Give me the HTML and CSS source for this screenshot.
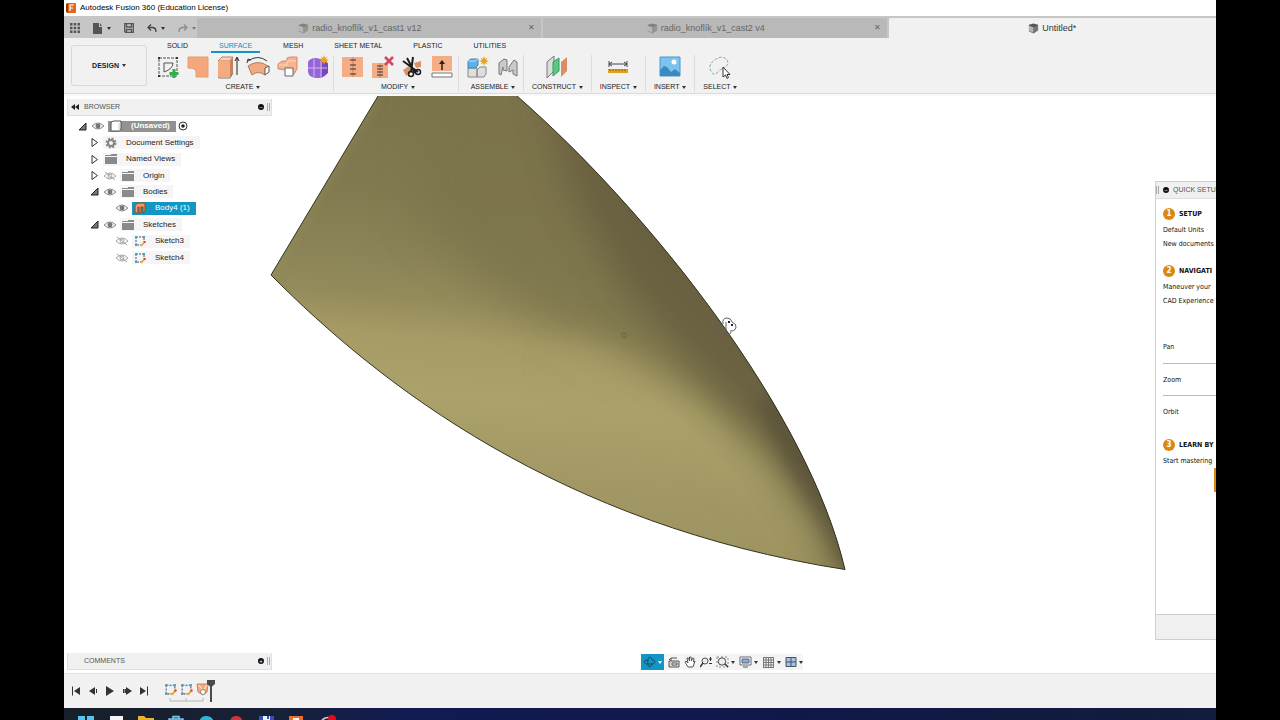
FILE: index.html
```html
<!DOCTYPE html>
<html lang="en">
<head>
<meta charset="utf-8">
<title>Autodesk Fusion 360 (Education License)</title>
<link rel="stylesheet" href="styles.css">
</head>
<body>
<svg class="defs" aria-hidden="true">
  <symbol id="eye" viewBox="0 0 14 10"><path d="M1 5Q7-1 13 5Q7 11 1 5Z" fill="#eee" stroke="#8b8b8b"/><circle cx="7" cy="5" r="2.4" fill="#777"/></symbol>
  <symbol id="eye-off" viewBox="0 0 14 10"><path d="M1 5Q7-1 13 5Q7 11 1 5ZM2 1L12 9" fill="none" stroke="#a5a5a5"/><circle cx="7" cy="5" r="2" fill="none" stroke="#a5a5a5"/></symbol>
  <symbol id="folder" viewBox="0 0 12 10"><path d="M0 1h6v1H0zM6 0h6v2H6zM0 3h12v7H0z" fill="#8a8a8a"/></symbol>
  <symbol id="open" viewBox="0 0 9 9"><path d="M8 1V8H1Z" fill="#777" stroke="#222"/></symbol>
  <symbol id="closed" viewBox="0 0 9 9"><path d="M2 .5L7.500 4.500L2 8.500Z" fill="#fff" stroke="#333"/></symbol>
  <symbol id="sketch" viewBox="0 0 12 12"><path d="M2 2H10V7M2 2V10H7" fill="none" stroke="#556" stroke-dasharray="2 1"/><path d="M1 1h2v2H1zM9 1h2v2H9zM1 9h2v2H1z" fill="#4aa3c7"/><path d="M7 11L10.500 7" stroke="#e8a33a" stroke-width="1.800"/><circle cx="10.800" cy="7" r="1" fill="#d2382c"/></symbol>
  <symbol id="cube" viewBox="0 0 12 12"><path d="M1 2L6 .5L11 2V8L6 11.500L1 9Z" fill="#555"/><path d="M1 3L6 4.500V11L1 8.500Z" fill="#b4b4b4"/><path d="M6 4.500L11 2.500V8L6 11Z" fill="#777"/></symbol>
  <symbol id="star" viewBox="0 0 10 10"><path d="M5 0L6 3L8.500 1.500L7 4L10 5L7 6L8.500 8.500L6 7L5 10L4 7L1.500 8.500L3 6L0 5L3 4L1.500 1.500L4 3Z" fill="#eaa21c"/></symbol>
</svg>
<div class="app">
  <header class="titlebar">
    <svg class="ico10" viewBox="0 0 10 10"><rect x="1" width="9" height="10" rx="1" fill="#e2661c"/><path d="M0 1L2 0V10L0 9Z" fill="#8f3b0e"/><path d="M4 8V2H8M4 5H7" fill="none" stroke="#fff" stroke-width="1.200"/></svg>
    <span>Autodesk Fusion 360 (Education License)</span>
  </header>

  <div class="docbar">
    <div class="quick">
      <button aria-label="Data panel"><svg width="10" height="10" viewBox="0 0 10 10" fill="#555"><path d="M0 0h2.500v2.500H0zM3.700 0h2.500v2.500H3.700zM7.500 0h2.500v2.500H7.500zM0 3.700h2.500v2.500H0zM3.700 3.700h2.500v2.500H3.700zM7.500 3.700h2.500v2.500H7.500zM0 7.500h2.500v2.500H0zM3.700 7.500h2.500v2.500H3.700zM7.500 7.500h2.500v2.500H7.500z"/></svg></button>
      <button aria-label="File"><svg width="10" height="12" viewBox="0 0 10 12"><path d="M0 1H6V5H9V12H0Z" fill="#555"/><path d="M7 1L9 4H7Z" fill="#555"/></svg><i class="caret"></i></button>
      <button aria-label="Save"><svg width="10" height="10" viewBox="0 0 10 10"><path d="M.7.700H9.300V9.300H1.500L.7 8.500ZM2.500 1V4H7.500V1M2.500 9V6.500H7.500V9" fill="none" stroke="#555" stroke-width="1.300"/></svg></button>
      <button aria-label="Undo"><svg width="10" height="9" viewBox="0 0 10 9"><path d="M1 3.500H6Q9 4 9 8M4 .5L1 3.500L4 6.500" fill="none" stroke="#444" stroke-width="1.300"/></svg><i class="caret"></i></button>
      <button aria-label="Redo" class="dim"><svg width="10" height="9" viewBox="0 0 10 9"><path d="M9 3.500H4Q1 4 1 8M6 .5L9 3.500L6 6.500" fill="none" stroke="#555" stroke-width="1.300"/></svg><i class="caret"></i></button>
    </div>
    <div class="tab dimtab"><div class="tabname"><svg class="ico11"><use href="#cube"/></svg><span>radio_knoflík_v1_cast1 v12</span></div><button class="close" aria-label="Close">✕</button></div>
    <div class="tab dimtab"><div class="tabname"><svg class="ico11"><use href="#cube"/></svg><span>radio_knoflík_v1_cast2 v4</span></div><button class="close" aria-label="Close">✕</button></div>
    <div class="tab current"><div class="tabname"><svg class="ico11"><use href="#cube"/></svg><span>Untitled*</span></div></div>
  </div>

  <div class="ribbon">
    <button class="design">DESIGN <i class="caret"></i></button>
    <div class="ribbonmain">
      <nav class="modes">
        <button>SOLID</button><button class="on">SURFACE</button><button>MESH</button><button>SHEET METAL</button><button>PLASTIC</button><button>UTILITIES</button>
      </nav>
      <div class="groups">
        <div class="group many">
          <div class="icons">
            <svg viewBox="0 0 24 24"><path d="M3 3H21V21H3Z" fill="none" stroke="#555" stroke-dasharray="3 1"/><path d="M2 2h2v2H2zM20 2h2v2h-2zM2 20h2v2H2z" fill="#333"/><path d="M8 8H17Q17 14 8 17Z" fill="none" stroke="#555"/><path d="M18 14V23M13.500 18.500H22.500" stroke="#2fae4e" stroke-width="3"/></svg>
            <svg viewBox="0 0 24 24"><path d="M2 2H22V22H10V17Q10 13 2 13Z" fill="#f4a77c" stroke="#e59d72"/></svg>
            <svg viewBox="0 0 24 24"><path d="M2 6L6 2H17L14 6Z" fill="#fbd0b3" stroke="#b78465"/><path d="M2 6H14V22H2Z" fill="#f5ab80"/><path d="M14 6L17 2V18L14 22Z" fill="#c9825a"/><path d="M2 22L3 23H14L17 18" fill="none" stroke="#777"/><path d="M21 20V3M19 6L21 2L23 6" fill="none" stroke="#222"/></svg>
            <svg viewBox="0 0 24 24"><path d="M2 11Q12 4 22 11L19 20Q12 15 6 20Z" fill="#f4aa80" stroke="#ad7c61"/><path d="M19 13L23 11V17L19 20Z" fill="#fff" stroke="#555"/><path d="M2 6Q12-1 21 6M1 8L2 4L5 5" fill="none" stroke="#333"/></svg>
            <svg viewBox="0 0 24 24"><path d="M2 9L6 6H11V3L14 2H21V14L18 19H10V15L2 14Z" fill="#f6b38d" stroke="#cf8e6b"/><path d="M3 10H11V6H20" fill="none" stroke="#ffd8be"/><path d="M9 13H17V21H9Z" fill="#fff" stroke="#666"/></svg>
            <svg viewBox="0 0 24 24"><path d="M2 7Q4 3 10 3L20 5Q22 7 22 17Q19 23 12 23Q3 23 2 17Z" fill="#9564d6"/><path d="M16 6L22 8V18L16 22Z" fill="#7648b9"/><path d="M8 4V22M15 6V22M2 13H21" stroke="#d2b6f5" fill="none"/><use href="#star" x="13" y="0" width="10" height="10"/></svg>
          </div>
          <button class="grouplabel">CREATE <i class="caret"></i></button>
        </div>
        <div class="group many">
          <div class="icons">
            <svg viewBox="0 0 24 24"><path d="M1 2H22V22H1Z" fill="#f4ad84"/><path d="M12 2V22" stroke="#c88257"/><path d="M9 5h6M9 10h6M9 14h6M9 19h6" stroke="#333"/></svg>
            <svg viewBox="0 0 24 24"><path d="M1 8H17V23H1Z" fill="#f4ad84"/><path d="M9 8V23" stroke="#c88257"/><path d="M6 11h6M6 14h6M6 17h6M6 20h6" stroke="#333"/><path d="M14 2L22 10M22 2L14 10" stroke="#d64560" stroke-width="2.500"/></svg>
            <svg viewBox="0 0 24 24"><path d="M2 15L8 11L11 17L5 21Z" fill="#dd9268"/><path d="M13 8L20 6V12L15 13Z" fill="#dd9268"/><path d="M6 3L14 18M2 6L17 17M12 2L10 17" stroke="#1d1d1d" stroke-width="2"/><circle cx="10" cy="19" r="2.500" fill="none" stroke="#1d1d1d" stroke-width="1.500"/><circle cx="17" cy="17" r="2.500" fill="none" stroke="#1d1d1d" stroke-width="1.500"/></svg>
            <svg viewBox="0 0 24 24"><path d="M1 1H21V16H1Z" fill="#f4ad84"/><path d="M1 18H21V22H1Z" fill="#fff" stroke="#777"/><path d="M11 15V8" stroke="#222" stroke-width="1.500"/><path d="M8 9L11 5L14 9Z" fill="#222"/></svg>
          </div>
          <button class="grouplabel">MODIFY <i class="caret"></i></button>
        </div>
        <div class="group many">
          <div class="icons">
            <svg viewBox="0 0 24 24"><path d="M2 13H11V22H2ZM11 15L14 12H20V19L18 22H11Z" fill="#dedede" stroke="#888"/><path d="M2 6L5 4H12V10L10 13H2Z" fill="#5fb1e5" stroke="#3f87b5"/><path d="M2 6H9L12 4" fill="none" stroke="#b9e0f6"/><use href="#star" x="13" y="1" width="10" height="10"/></svg>
            <svg viewBox="0 0 24 24"><path d="M3 8L8 4L11 5V16L7 15V12L5 20L3 19Z" fill="#c7cbcd" stroke="#777"/><path d="M13 12L18 5L21 7V21L17 19V15L13 17Z" fill="#c7cbcd" stroke="#777"/></svg>
          </div>
          <button class="grouplabel">ASSEMBLE <i class="caret"></i></button>
        </div>
        <div class="group">
          <div class="icons">
            <svg viewBox="0 0 24 24"><path d="M2 7L9 1V16L2 23Z" fill="#dcdcdc" stroke="#777"/><path d="M8 7L14 3V16L8 21Z" fill="#59c983" stroke="#339b5d"/><path d="M16 7L22 2V16L16 22Z" fill="#dc8c61"/></svg>
          </div>
          <button class="grouplabel">CONSTRUCT <i class="caret"></i></button>
        </div>
        <div class="group">
          <div class="icons">
            <svg viewBox="0 0 24 24"><path d="M3 6V12M21 6V12M3 9H21M6 7L3 9L6 11M18 7L21 9L18 11" fill="none" stroke="#445"/><path d="M2 14H22V18H2Z" fill="#e3a01c"/><path d="M4 14v2M7 14v2M10 14v2M13 14v2M16 14v2M19 14v2" stroke="#8e6413"/></svg>
          </div>
          <button class="grouplabel">INSPECT <i class="caret"></i></button>
        </div>
        <div class="group">
          <div class="icons">
            <svg viewBox="0 0 24 24"><path d="M2 2H22V21H2Z" fill="#7cc4ef" stroke="#4a98c9"/><path d="M2 15L6 11L9 12L13 17L17 14L22 18V21H2Z" fill="#3b8bc1"/><circle cx="16" cy="7" r="2.500" fill="#fff"/></svg>
          </div>
          <button class="grouplabel">INSERT <i class="caret"></i></button>
        </div>
        <div class="group last">
          <div class="icons">
            <svg viewBox="0 0 24 24"><path d="M14 14Q22 10 19 5Q15 0 8 4Q-1 10 3 16Q5 21 9 18Q11 15 14 14" fill="none" stroke="#79ad9d" stroke-dasharray="3 1.500"/><path d="M15 12V22L17.500 20L19 23.500L20.500 22.500L19 19.500H22Z" fill="#fff" stroke="#333"/></svg>
          </div>
          <button class="grouplabel">SELECT <i class="caret"></i></button>
        </div>
      </div>
    </div>
  </div>

  <main class="canvas">
    <svg class="model" viewBox="64 96 1152 577" preserveAspectRatio="xMidYMid slice" role="img" aria-label="Surface body">
      <defs>
        <linearGradient id="base" gradientUnits="userSpaceOnUse" x1="400" y1="96" x2="360" y2="570">
          <stop offset="0" stop-color="#7c744b"/><stop offset=".2" stop-color="#817a50"/><stop offset=".34" stop-color="#8b8457"/><stop offset=".42" stop-color="#948b5b"/><stop offset=".5" stop-color="#a69b65"/><stop offset=".62" stop-color="#aba16a"/><stop offset=".8" stop-color="#a19764"/><stop offset="1" stop-color="#9c925d"/>
        </linearGradient>
        <clipPath id="bodyclip"><path d="M378 96L271 275C380 385 560 525 845 569.500C808 412 650 212 517 96Z"/></clipPath>
        <filter id="wide" x="-30%" y="-30%" width="160%" height="160%"><feGaussianBlur stdDeviation="22"/></filter>
        <filter id="mid" x="-30%" y="-30%" width="160%" height="160%"><feGaussianBlur stdDeviation="18"/></filter>
        <filter id="thin" x="-30%" y="-30%" width="160%" height="160%"><feGaussianBlur stdDeviation="7"/></filter>
      </defs>
      <g clip-path="url(#bodyclip)">
        <path d="M250 80H860V590H250Z" fill="url(#base)"/>
        <path d="M430 60L420 220L510 300L600 345L690 395L770 465L860 610V60Z" fill="#7b734c" opacity=".8" filter="url(#wide)"/>
        <path d="M540 60L570 190L625 290L690 365L770 450L860 600V60Z" fill="#675f3f" opacity=".9" filter="url(#mid)"/>
        <path d="M755 400L785 460L814 512L845 574L880 570L820 390Z" fill="#5b553b" opacity=".85" filter="url(#thin)"/>
        <path d="M370 90L262 274" stroke="#98905c" stroke-width="18" opacity=".65" filter="url(#thin)"/>
        <path d="M560 360Q660 390 760 485L820 555" fill="none" stroke="#b0a66e" stroke-width="22" opacity=".6" filter="url(#mid)"/>
      </g>
      <path d="M378 96L271 275C380 385 560 525 845 569.500C808 412 650 212 517 96" fill="none" stroke="#353322"/>
      <circle cx="624" cy="335.500" r="2.500" fill="none" stroke="#5c6b3e"/>
      <g fill="none" stroke="#5b6066"><path d="M723 324Q722 318 727 318Q731 318 732 322Q737 324 736 328Q734 332 730 331M721 323Q716 325 717 329Q719 332 722 331M723 331Q724 336 728 335Q731 334 731 332M726 322V331"/><path d="M728 321h2v2h-2zM731 324h2v2h-2z" fill="#222" stroke="none"/></g>
    </svg>

    <aside class="left">
      <section>
        <div class="panelhead"><svg width="8" height="6" viewBox="0 0 8 6"><path d="M4 0V6L0 3ZM8 0V6L4 3Z" fill="#222"/></svg><span>BROWSER</span><button class="dot" aria-label="Collapse">–</button><i class="grip"></i></div>
        <ul class="tree">
          <li class="l0"><svg class="arrow"><use href="#open"/></svg><svg class="eye"><use href="#eye"/></svg><span class="node root"><svg class="ico12" viewBox="0 0 12 12"><path d="M1 3L3 1H11V9L9 11H1Z" fill="#fff" stroke="#555"/><path d="M9 3V11" stroke="#ccc"/></svg>(Unsaved)</span><svg class="radio" viewBox="0 0 10 10"><circle cx="5" cy="5" r="4" fill="#fff" stroke="#333"/><circle cx="5" cy="5" r="1.800" fill="#222"/></svg></li>
          <li class="l1"><svg class="arrow"><use href="#closed"/></svg><span class="node"><svg class="ico12" viewBox="0 0 12 12"><circle cx="6" cy="6" r="4.500" fill="none" stroke="#858585" stroke-width="2" stroke-dasharray="2 1.530"/><circle cx="6" cy="6" r="3" fill="none" stroke="#858585" stroke-width="2"/></svg>Document Settings</span></li>
          <li class="l1"><svg class="arrow"><use href="#closed"/></svg><span class="node"><svg class="ico12"><use href="#folder"/></svg>Named Views</span></li>
          <li class="l1"><svg class="arrow"><use href="#closed"/></svg><svg class="eye"><use href="#eye-off"/></svg><span class="node"><svg class="ico12"><use href="#folder"/></svg>Origin</span></li>
          <li class="l1"><svg class="arrow"><use href="#open"/></svg><svg class="eye"><use href="#eye"/></svg><span class="node"><svg class="ico12"><use href="#folder"/></svg>Bodies</span></li>
          <li class="l2"><svg class="arrow"></svg><svg class="eye"><use href="#eye"/></svg><span class="node selected"><svg class="ico12" viewBox="0 0 12 12"><path d="M1 3L4 1H11V9L9 11V5H7V11H5V5H4V11H1Z" fill="#ef995f" stroke="#8a4b20"/></svg>Body4 (1)</span></li>
          <li class="l1"><svg class="arrow"><use href="#open"/></svg><svg class="eye"><use href="#eye"/></svg><span class="node"><svg class="ico12"><use href="#folder"/></svg>Sketches</span></li>
          <li class="l2"><svg class="arrow"></svg><svg class="eye"><use href="#eye-off"/></svg><span class="node"><svg class="ico12"><use href="#sketch"/></svg>Sketch3</span></li>
          <li class="l2"><svg class="arrow"></svg><svg class="eye"><use href="#eye-off"/></svg><span class="node"><svg class="ico12"><use href="#sketch"/></svg>Sketch4</span></li>
        </ul>
      </section>
      <div class="panelhead comments"><span>COMMENTS</span><button class="dot" aria-label="Expand">+</button><i class="grip"></i></div>
    </aside>

    <div class="navbar">
      <button class="on" aria-label="Orbit"><svg width="13" height="12" viewBox="0 0 13 12"><path d="M5 4Q5 1 7 1Q9 2 9 4Q12 4 12 6Q11 9 7 8Q3 9 1 6Q1 4 5 4Q4 11 7 11Q9 10 9 7" fill="none" stroke="#10506a"/></svg><i class="caret light"></i></button>
      <button aria-label="Look at"><svg width="12" height="12" viewBox="0 0 12 12"><path d="M1 5H11V11H1ZM3 5V2L1 4M3 2H9" fill="#ddd" stroke="#555"/><path d="M4 7H9V9H4Z" fill="#fff" stroke="#555"/></svg></button>
      <button aria-label="Pan"><svg width="12" height="12" viewBox="0 0 12 12"><path d="M4 11L1 6L2 5L4 7L3 2L4.500 2L5.500 5L5.500 1H7L7.500 5L8.500 2L10 2.500L9.500 6L11 5L9 11Z" fill="#fff" stroke="#555"/></svg></button>
      <button aria-label="Zoom"><svg width="12" height="12" viewBox="0 0 12 12"><circle cx="5" cy="5" r="3" fill="#e7eef4" stroke="#555"/><path d="M3 7L0 11" stroke="#333" stroke-width="1.500"/><path d="M9 3h3M10.500 1v4M9 7.500h3" stroke="#333"/></svg></button>
      <button aria-label="Fit"><svg width="13" height="12" viewBox="0 0 13 12"><path d="M1 1H12V11H1Z" fill="none" stroke="#888" stroke-dasharray="2 2"/><circle cx="6" cy="5.500" r="3.700" fill="#eaf0f4" stroke="#444"/><path d="M9 8L12 11" stroke="#333" stroke-width="1.500"/></svg><i class="caret"></i></button>
      <button aria-label="Display"><svg width="13" height="12" viewBox="0 0 13 12"><path d="M1 1H12V9H1Z" fill="#fff" stroke="#667"/><path d="M3 3H10V7H3Z" fill="#8cabdd" stroke="#567"/><path d="M4 11H9" stroke="#555"/></svg><i class="caret"></i></button>
      <button aria-label="Grid"><svg width="13" height="12" viewBox="0 0 13 12"><path d="M1.500 1V11.500M4 1V11.500M6.500 1V11.500M9 1V11.500M11.500 1V11.500M1 1.500H12M1 4H12M1 6.500H12M1 9H12M1 11.500H12" stroke="#777"/></svg><i class="caret"></i></button>
      <button aria-label="Viewports"><svg width="12" height="12" viewBox="0 0 12 12"><path d="M1 1.500H11V10.500H1ZM6 1.500V10.500M1 6H11" fill="#a9bfe4" stroke="#456"/></svg><i class="caret"></i></button>
    </div>

    <aside class="setup">
      <div class="panelhead setuphead"><i class="grip"></i><button class="dot" aria-label="Collapse">–</button><span>QUICK SETUP</span></div>
      <div class="setupbody">
        <h2><b class="num">1</b>SETUP</h2>
        <p>Default Units</p>
        <p>New documents</p>
        <h2 class="second"><b class="num">2</b>NAVIGATI</h2>
        <p>Maneuver your</p>
        <p>CAD Experience</p>
        <div class="moves"><p>Pan</p><p>Zoom</p><p>Orbit</p></div>
        <h2><b class="num">3</b>LEARN BY</h2>
        <p>Start mastering</p>
        <button class="go" aria-label="Start learning"></button>
      </div>
      <div class="setupfoot"></div>
    </aside>
  </main>

  <footer class="timeline">
    <div class="playback">
      <button aria-label="First"><svg viewBox="0 0 10 10"><path d="M1 .5H2V9.500H1ZM9 1V9L3 5Z"/></svg></button>
      <button aria-label="Previous"><svg viewBox="0 0 10 10"><path d="M7 1V9L1 5ZM8 3H9V7H8Z"/></svg></button>
      <button aria-label="Play"><svg viewBox="0 0 10 10"><path d="M1 0V10L9 5Z"/></svg></button>
      <button aria-label="Next"><svg viewBox="0 0 10 10"><path d="M4 1V9L10 5ZM1 3H2V7H1ZM2.500 3H4V7H2.500Z"/></svg></button>
      <button aria-label="Last"><svg viewBox="0 0 10 10"><path d="M1 1V9L7 5ZM8 .5H9V9.500H8Z"/></svg></button>
    </div>
    <svg class="features" viewBox="0 0 56 28"><use href="#sketch" x="2" y="6" width="13" height="13"/><use href="#sketch" x="18" y="6" width="13" height="13"/><path d="M35 7H46L45 15L41 18L36 15Z" fill="#f2ab80" stroke="#ce8457"/><path d="M37 8L41 14L45 8" fill="none" stroke="#fff0e4"/><circle cx="41" cy="15" r="2.500" fill="#fff" stroke="#888"/><path d="M8 21V24H41V21M24 21V24" fill="none" stroke="#b5b5b5"/><path d="M45 3H53V7L50 9.500V25H48V9.500L45 7Z" fill="#4a4a4a"/></svg>
  </footer>

  <div class="taskbar">
    <svg viewBox="0 0 20 8"><path d="M2 1h7v7H2zM11 1h7v7h-7z" fill="#55c5f2"/></svg>
    <svg viewBox="0 0 20 8"><path d="M4 1H17V8H4Z" fill="#f3f5f6"/></svg>
    <svg viewBox="0 0 20 8"><path d="M2 1H8L10 3H18V8H2Z" fill="#e9b12f"/><path d="M5 6h10v2H5z" fill="#4b9edb"/></svg>
    <svg viewBox="0 0 20 8"><path d="M3 4H17V8H3ZM7 4V1.500H13V4" fill="#2c638b" stroke="#82c4e8" stroke-width="1.500"/></svg>
    <svg viewBox="0 0 20 8"><path d="M3 8Q4 1 10 1Q17 1 18 8Z" fill="#30b4dc"/></svg>
    <svg viewBox="0 0 20 8"><path d="M3 8Q5 1 10 1Q16 1 17 8Z" fill="#d23438"/></svg>
    <svg viewBox="0 0 20 8"><path d="M3 1H18V8H3Z" fill="#3650b8"/><path d="M7 1h7v4H7z" fill="#eef"/><path d="M11 1h2v3h-2z" fill="#3650b8"/></svg>
    <svg viewBox="0 0 20 8"><path d="M3 1H17V8H3Z" fill="#ed6f25"/><path d="M8 8V4H13" fill="none" stroke="#fff" stroke-width="2"/></svg>
    <svg viewBox="0 0 20 8"><path d="M4 8Q8 1 15 3" fill="none" stroke="#ccc" stroke-width="1.500"/><circle cx="16" cy="4" r="4" fill="#e30b16"/></svg>
  </div>
</div>
</body>
</html>
```

FILE: styles.css
```css
* { box-sizing: border-box; }

body {
  margin: 0;
  padding: 0 5%;
  background: #000;
  font: 7px/10px "Liberation Sans", Arial, sans-serif;
  color: #222;
}

button {
  margin: 0;
  padding: 0;
  border: 0;
  background: none;
  font: inherit;
  color: inherit;
  white-space: nowrap;
}

svg { display: block; flex: none; }
h2, p, ul { margin: 0; padding: 0; list-style: none; }
.defs { position: absolute; width: 0; height: 0; }

.app {
  display: flex;
  flex-direction: column;
  height: 100vh;
  overflow: hidden;
  background: #fff;
}

.caret {
  display: inline-block;
  border: 2px solid transparent;
  border-top: 3px solid #333;
  border-bottom: 0;
  vertical-align: middle;
}
.caret.light { border-top-color: #fff; }

.ico10 { width: 10px; height: 10px; }
.ico11 { width: 11px; height: 11px; }
.ico12 { width: 12px; height: 12px; }

/* Title bar */
.titlebar {
  display: flex;
  align-items: center;
  gap: 4px;
  height: 16px;
  padding-left: 2px;
  font-size: 8px;
  color: #000;
}

/* Document tabs */
.docbar {
  display: flex;
  gap: 2px;
  height: 22px;
  padding-top: 2px;
  background: #c6c6c6;
}
.quick {
  display: flex;
  align-items: center;
  gap: 13px;
  flex: none;
  width: 131px;
  padding-left: 6px;
}
.quick button { display: flex; align-items: center; gap: 4px; }
.quick .dim { opacity: .5; }
.tab {
  display: flex;
  align-items: center;
  flex: 21 1 0;
  background: #b9b9b9;
  font-size: 9px;
  color: #666;
}
.tab.current {
  flex-grow: 20;
  border-radius: 2px 0 0 0;
  background: #f1f1f1;
  color: #333;
}
.tabname {
  display: flex;
  align-items: center;
  justify-content: center;
  gap: 3px;
  flex: 1;
}
.dimtab .ico11 { opacity: .55; }
.close { width: 18px; font-size: 8px; }

/* Ribbon */
.ribbon {
  display: flex;
  height: 58px;
  border-bottom: 2px solid #f8f8f8;
  background: #f1f1f1;
  box-shadow: inset 0 -1px #dcdcdc;
}
.design {
  width: 76px;
  margin: 7px 6px 8px 7px;
  border: 1px solid #d9d9d9;
  border-radius: 3px;
  font-weight: bold;
}
.design .caret, .grouplabel .caret { margin-left: 1px; }
.modes {
  display: flex;
  gap: 15px;
  height: 15px;
  padding-left: 6px;
}
.modes button { padding: 0 8px; }
.modes .on {
  box-shadow: inset 0 -2px #0e96c4;
  color: #0e8ebc;
}
.groups { display: flex; padding-top: 2px; }
.group {
  display: flex;
  flex-direction: column;
  align-items: center;
  gap: 3px;
  padding: 0 8px;
  border-right: 1px solid #dcdcdc;
}
.group.many { padding: 0 3px; }
.group + .group.many { padding-left: 7px; }
.group.last { border: 0; }
.icons { display: flex; gap: 6px; }
.icons svg { width: 24px; height: 24px; }

/* Canvas and floating panels */
.canvas {
  position: relative;
  display: flex;
  flex: 1;
  min-height: 0;
  background: #fff;
}
.model { position: absolute; inset: 0; width: 100%; height: 100%; }
.left, .navbar, .setup { z-index: 1; }
.left {
  display: flex;
  flex-direction: column;
  justify-content: space-between;
  width: 208px;
  margin-right: 16px;
  padding: 3px 0 3px 3px;
}
.panelhead {
  display: flex;
  align-items: center;
  gap: 5px;
  height: 17px;
  padding: 0 1px 0 3px;
  border: 1px solid #dedede;
  border-width: 0 1px 1px 1px;
  background: #f0f0f0;
  color: #555;
}
.panelhead span { flex: 1; }
.panelhead.comments { padding-left: 16px; }
.dot {
  flex: none;
  width: 6px;
  height: 6px;
  border-radius: 3px;
  background: #111;
  color: #fff;
  font-size: 6px;
  line-height: 6px;
}
.grip {
  flex: none;
  width: 3px;
  height: 8px;
  margin-left: -2px;
  border: 1px solid #aaa;
  border-width: 0 1px;
}
.tree {
  display: grid;
  grid-auto-rows: 1fr;
  height: 148px;
  margin-top: 2px;
  font-size: 8px;
}
.tree li { display: flex; align-items: center; padding-left: 11px; }
.tree .l1 { padding-left: 23px; }
.tree .l2 { padding-left: 35px; }
.arrow { width: 9px; height: 9px; margin-right: 4px; }
.eye { width: 14px; height: 10px; margin-right: 3px; }
.node {
  display: flex;
  align-items: center;
  gap: 9px;
  height: 13px;
  padding: 0 6px 0 2px;
  background: #f5f5f5;
}
.root { height: 11px; background: #929292; color: #fff; font-weight: bold; }
.selected { background: #1296c4; color: #fff; }
.radio { width: 10px; height: 10px; margin-left: 2px; }

.navbar {
  display: flex;
  align-items: center;
  align-self: flex-end;
  gap: 4px;
  height: 16px;
  margin: 0 auto 3px;
  background: #f4f4f4;
}
.navbar button { display: flex; align-items: center; gap: 2px; height: 16px; }
.navbar .on { padding: 0 2px; background: #1296c4; }

.setup {
  display: flex;
  flex-direction: column;
  width: 61px;
  margin: 85px 0 33px;
  border: 1px solid #cfcfcf;
  border-right: 0;
  background: #fff;
  overflow: hidden;
  white-space: nowrap;
  font-family: "DejaVu Sans Condensed", "DejaVu Sans", sans-serif;
  color: #111;
}
.setuphead {
  flex: none;
  gap: 4px;
  border-width: 0 0 1px;
  padding: 0 0 0 2px;
  font-family: "Liberation Sans", Arial, sans-serif;
}
.setupbody { flex: 1; padding: 8px 0 0 7px; }
.setupbody h2 {
  display: flex;
  align-items: center;
  gap: 4px;
  height: 14px;
  font-size: 7px;
}
.setupbody > p { height: 14px; padding-top: 4px; }
.setupbody .second { margin-top: 15px; }
.num {
  flex: none;
  width: 12px;
  height: 12px;
  border-radius: 6px;
  background: #dc8712;
  color: #fff;
  font-size: 8px;
  line-height: 12px;
  text-align: center;
}
.moves { padding: 25px 0 11px; }
.moves p { height: 32px; padding: 11px 0; }
.moves p + p { border-top: 1px solid #b9b9b9; }
.go { display: block; width: 80px; height: 24px; margin: 2px 0 0 51px; background: #dc8712; }
.setupfoot { height: 25px; border-top: 1px solid #cfcfcf; background: #f0f0f0; }

/* Timeline and taskbar */
.timeline {
  display: flex;
  align-items: center;
  gap: 13px;
  flex: none;
  height: 35px;
  padding-left: 7px;
  border-top: 1px solid #e2e2e2;
  background: #f1f1f1;
}
.playback { display: flex; gap: 7px; }
.playback svg { width: 10px; height: 10px; fill: #333; }
.features { width: 56px; height: 28px; }
.taskbar {
  display: flex;
  align-items: flex-start;
  gap: 10px;
  flex: none;
  height: 12px;
  padding: 7px 0 0 12px;
  overflow: hidden;
  background: linear-gradient(90deg, #171f2a, #172136 18%, #121b52 30%, #11184a 60%, #131c3c);
}
.taskbar svg { width: 20px; height: 8px; }
```
